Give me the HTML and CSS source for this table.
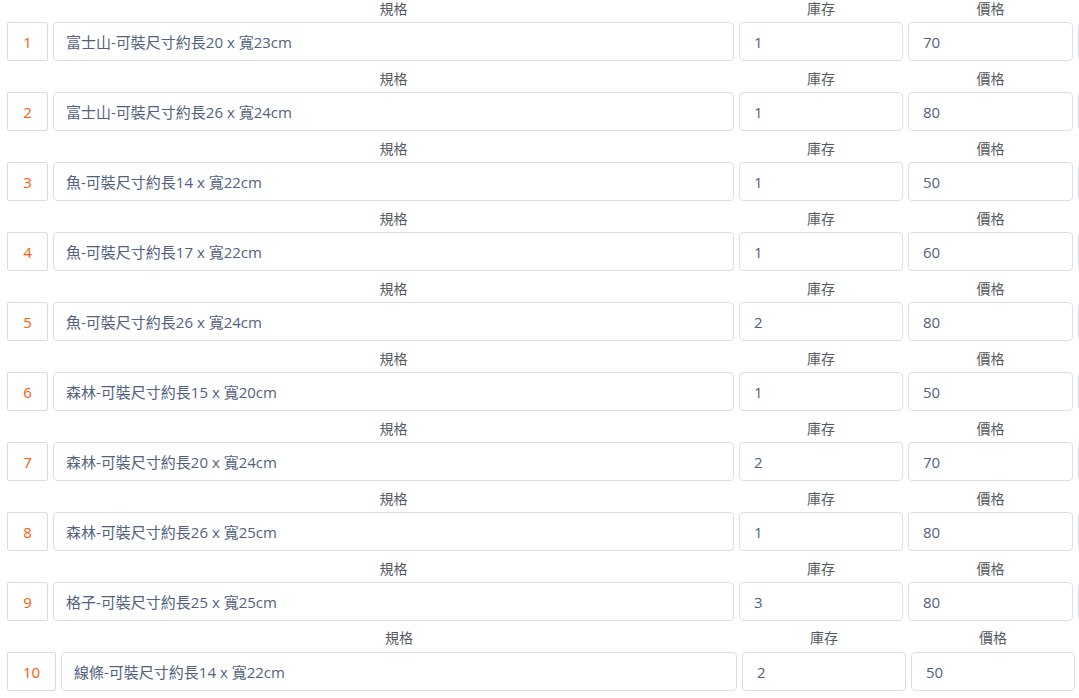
FILE: index.html
```html
<!DOCTYPE html>
<html lang="zh-Hant">
<head>
<meta charset="utf-8">
<title>規格列表</title>
<link rel="stylesheet" href="styles.css">
</head>
<body>
<div class="list">
  <div class="row">
    <span class="lbl"></span><span class="lbl">規格</span><span class="lbl">庫存</span><span class="lbl">價格</span><span class="lbl"></span>
    <div class="idx">1</div>
    <div class="inp">富士山-可裝尺寸約長20 x 寬23cm</div>
    <div class="inp num">1</div>
    <div class="inp num">70</div>
    <div class="inp"></div>
  </div>
  <div class="row">
    <span class="lbl"></span><span class="lbl">規格</span><span class="lbl">庫存</span><span class="lbl">價格</span><span class="lbl"></span>
    <div class="idx">2</div>
    <div class="inp">富士山-可裝尺寸約長26 x 寬24cm</div>
    <div class="inp num">1</div>
    <div class="inp num">80</div>
    <div class="inp"></div>
  </div>
  <div class="row">
    <span class="lbl"></span><span class="lbl">規格</span><span class="lbl">庫存</span><span class="lbl">價格</span><span class="lbl"></span>
    <div class="idx">3</div>
    <div class="inp">魚-可裝尺寸約長14 x 寬22cm</div>
    <div class="inp num">1</div>
    <div class="inp num">50</div>
    <div class="inp"></div>
  </div>
  <div class="row">
    <span class="lbl"></span><span class="lbl">規格</span><span class="lbl">庫存</span><span class="lbl">價格</span><span class="lbl"></span>
    <div class="idx">4</div>
    <div class="inp">魚-可裝尺寸約長17 x 寬22cm</div>
    <div class="inp num">1</div>
    <div class="inp num">60</div>
    <div class="inp"></div>
  </div>
  <div class="row">
    <span class="lbl"></span><span class="lbl">規格</span><span class="lbl">庫存</span><span class="lbl">價格</span><span class="lbl"></span>
    <div class="idx">5</div>
    <div class="inp">魚-可裝尺寸約長26 x 寬24cm</div>
    <div class="inp num">2</div>
    <div class="inp num">80</div>
    <div class="inp"></div>
  </div>
  <div class="row">
    <span class="lbl"></span><span class="lbl">規格</span><span class="lbl">庫存</span><span class="lbl">價格</span><span class="lbl"></span>
    <div class="idx">6</div>
    <div class="inp">森林-可裝尺寸約長15 x 寬20cm</div>
    <div class="inp num">1</div>
    <div class="inp num">50</div>
    <div class="inp"></div>
  </div>
  <div class="row">
    <span class="lbl"></span><span class="lbl">規格</span><span class="lbl">庫存</span><span class="lbl">價格</span><span class="lbl"></span>
    <div class="idx">7</div>
    <div class="inp">森林-可裝尺寸約長20 x 寬24cm</div>
    <div class="inp num">2</div>
    <div class="inp num">70</div>
    <div class="inp"></div>
  </div>
  <div class="row">
    <span class="lbl"></span><span class="lbl">規格</span><span class="lbl">庫存</span><span class="lbl">價格</span><span class="lbl"></span>
    <div class="idx">8</div>
    <div class="inp">森林-可裝尺寸約長26 x 寬25cm</div>
    <div class="inp num">1</div>
    <div class="inp num">80</div>
    <div class="inp"></div>
  </div>
  <div class="row">
    <span class="lbl"></span><span class="lbl">規格</span><span class="lbl">庫存</span><span class="lbl">價格</span><span class="lbl"></span>
    <div class="idx">9</div>
    <div class="inp">格子-可裝尺寸約長25 x 寬25cm</div>
    <div class="inp num">3</div>
    <div class="inp num">80</div>
    <div class="inp"></div>
  </div>
  <div class="row wide">
    <span class="lbl"></span><span class="lbl">規格</span><span class="lbl">庫存</span><span class="lbl">價格</span><span class="lbl"></span>
    <div class="idx">10</div>
    <div class="inp">線條-可裝尺寸約長14 x 寬22cm</div>
    <div class="inp num">2</div>
    <div class="inp num">50</div>
    <div class="inp"></div>
  </div>
</div>
</body>
</html>
```

FILE: styles.css
```css
html, body {
  margin: 0;
  padding: 0;
  background: #ffffff;
  overflow: hidden;
}
body {
  font-family: "Open Sans", "Noto Sans CJK TC", sans-serif;
  font-size: 15px;
}
.list {
  padding-left: 7px;
}
.row {
  display: grid;
  width: 1236px;
  grid-template-columns: auto 1fr 164px 165px 165px;
  grid-template-rows: 18px 39px;
  column-gap: 5px;
  row-gap: 4px;
  margin-bottom: 9px;
}
.row.wide {
  width: 1238px;
  grid-template-columns: 49px 1fr 164px 164px 165px;
  grid-template-rows: 17px 39px;
  row-gap: 5px;
}
.lbl {
  text-align: center;
  font-size: 14px;
  line-height: 18px;
  color: #555a60;
}
.row.wide .lbl {
  line-height: 16px;
}
.idx {
  box-sizing: border-box;
  min-width: 41px;
  padding: 0 15px;
  border: 1px solid #dcdcdc;
  border-radius: 2px;
  color: #ff5a0a;
  display: flex;
  align-items: center;
  justify-content: center;
}
.inp {
  box-sizing: border-box;
  border: 1px solid #dcdfe6;
  border-radius: 4px;
  padding: 0 12px;
  display: flex;
  align-items: center;
  color: #52627e;
  white-space: nowrap;
  overflow: hidden;
}
.inp.num {
  padding-left: 14px;
}
```
